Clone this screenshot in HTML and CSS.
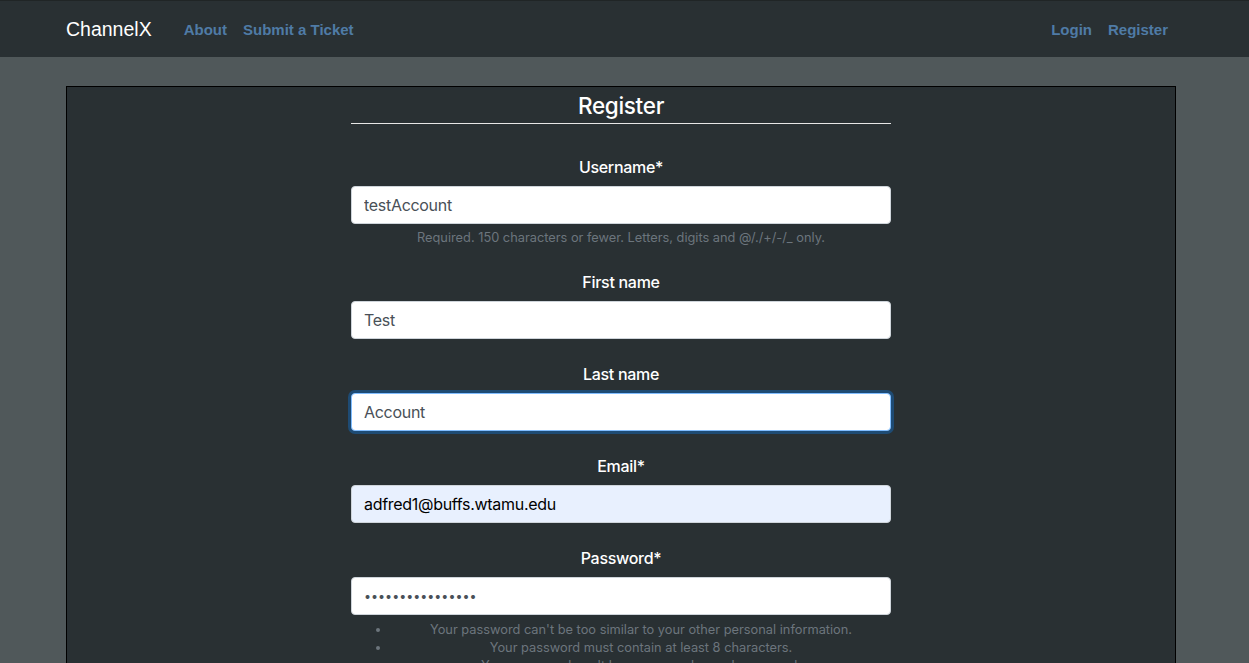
FILE: index.html
```html
<!DOCTYPE html>
<html lang="en">
<head>
<meta charset="utf-8">
<title>Register - ChannelX</title>
<link rel="stylesheet" href="styles.css">
</head>
<body>
<nav class="navbar">
  <div class="nav-inner">
    <div class="nav-left">
      <a class="brand" href="#">ChannelX</a>
      <a class="nav-link" href="#">About</a>
      <a class="nav-link" href="#">Submit a Ticket</a>
    </div>
    <div class="nav-right">
      <a class="nav-link" href="#">Login</a>
      <a class="nav-link" href="#">Register</a>
    </div>
  </div>
</nav>
<main class="container">
  <form class="register-form">
    <h2 class="title">Register</h2>
    <div class="group">
      <label class="label">Username*</label>
      <input class="input" type="text" value="testAccount">
      <small class="help">Required. 150 characters or fewer. Letters, digits and @/./+/-/_ only.</small>
    </div>
    <div class="group">
      <label class="label">First name</label>
      <input class="input" type="text" value="Test">
    </div>
    <div class="group">
      <label class="label">Last name</label>
      <input class="input focused" type="text" value="Account">
    </div>
    <div class="group">
      <label class="label">Email*</label>
      <input class="input autofill" type="text" value="adfred1@buffs.wtamu.edu">
    </div>
    <div class="group">
      <label class="label">Password*</label>
      <input class="input password" type="password" value="testAccount12345">
      <ul class="help-list">
        <li>Your password can't be too similar to your other personal information.</li>
        <li>Your password must contain at least 8 characters.</li>
        <li>Your password can't be a commonly used password.</li>
        <li>Your password can't be entirely numeric.</li>
      </ul>
    </div>
  </form>
</main>
</body>
</html>
```
FILE: styles.css
```css
* { box-sizing: border-box; }
html, body { margin: 0; padding: 0; }
body {
  background: #50585a;
  font-family: Inter, "Noto Sans", sans-serif;
  color: #fff;
  padding-right: 7px;
}
.navbar {
  background: #293033;
  border-top: 1px solid #202526;
  height: 57px;
  margin-right: -7px;
  padding-right: 7px;
}
.nav-inner {
  width: 1110px;
  margin: 0 auto;
  height: 56px;
  display: flex;
  align-items: center;
  justify-content: space-between;
  font-family: "Liberation Sans", Arial, sans-serif;
}
.nav-left, .nav-right { display: flex; align-items: center; gap: 16px; }
.nav-right { padding-right: 8px; }
.brand {
  color: #fff;
  text-decoration: none;
  font-size: 19.5px;
  margin-right: 16px;
}
.nav-link {
  color: #4f7ba6;
  font-weight: bold;
  font-size: 15px;
  text-decoration: none;
}
.container {
  width: 1110px;
  margin: 29px auto 0;
  background: #293033;
  border: 1px solid #000;
  min-height: 700px;
}
.register-form {
  width: 540px;
  margin: 0 auto;
  text-align: center;
  letter-spacing: -0.3px;
}
.title {
  font-size: 22.5px;
  font-weight: 500;
  margin: 0;
  padding-top: 5px;
  line-height: 28px;
  padding-bottom: 3px;
  border-bottom: 1px solid #e6e6e6;
}
.group { margin-top: 31px; }
.group + .group { margin-top: 23px; }
.label {
  display: block;
  font-size: 16px;
  line-height: 24px;
  font-weight: 450;
  margin-bottom: 7px;
}
.input {
  display: block;
  width: 100%;
  height: 38px;
  padding: 6px 12px;
  font-family: Inter, "Noto Sans", sans-serif;
  font-size: 16px;
  letter-spacing: -0.3px;
  color: #495057;
  background: #fff;
  border: 1px solid #ced4da;
  border-radius: 4px;
  outline: none;
}
.input.focused {
  border-color: #80bdff;
  box-shadow: 0 0 0 3px #1e4b74;
}
.input.autofill { background: #e8f0fe; color: #000; }
.input.password { font-size: 12.5px; letter-spacing: 0; }
.help {
  display: block;
  margin-top: 4px;
  font-size: 12.8px;
  line-height: 19px;
  color: #6c757d;
  letter-spacing: 0;
}
.help-list {
  margin: 6px 0 0;
  padding-left: 40px;
  font-size: 12.8px;
  line-height: 18px;
  color: #6c757d;
  letter-spacing: 0;
}
.help-list li { text-align: center; }
```
